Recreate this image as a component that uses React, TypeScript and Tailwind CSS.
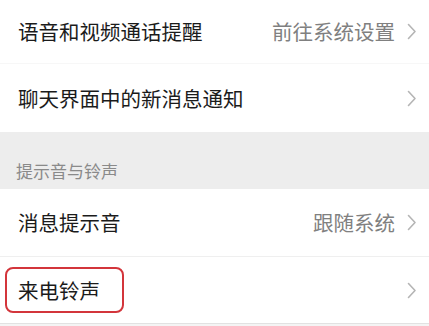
const FONT = "font-['Noto_Sans_CJK_SC','Noto_Sans',sans-serif]";

function Chevron() {
  return (
    <svg width="10" height="17" viewBox="0 0 10 17" fill="none" className="shrink-0">
      <path d="M1.5 1.5L8 8.5L1.5 15.5" stroke="#b5b5b5" strokeWidth="1.6" strokeLinecap="round" strokeLinejoin="round" />
    </svg>
  );
}

function Row({ label, value, height, highlight }: { label: string; value?: string; height: string; highlight?: boolean }) {
  return (
    <div className={`relative flex items-center justify-between bg-white pl-[18px] pr-[12px] ${height}`}>
      <span className="text-[20.5px] leading-none text-[#1b1b1b]">{label}</span>
      <div className="flex items-center gap-[12px]">
        {value && <span className="text-[20.5px] leading-none text-[#808080]">{value}</span>}
        <Chevron />
      </div>
      {highlight && (
        <div className="absolute left-[5px] top-[10px] h-[46px] w-[119px] rounded-[8px] border-2 border-[#d3353b]" />
      )}
    </div>
  );
}

export default function App() {
  return (
    <div className={`w-[429px] h-[326px] overflow-hidden bg-[#ededed] ${FONT}`}>
      <Row label="语音和视频通话提醒" value="前往系统设置" height="h-[63px]" />
      <div className="h-px bg-[#f7f7f7]" />
      <Row label="聊天界面中的新消息通知" height="h-[68px]" />
      <div className="flex h-[57px] items-end pb-[10px] pl-[16px] text-[17px] leading-none text-[#8a8a8a]">
        提示音与铃声
      </div>
      <Row label="消息提示音" value="跟随系统" height="h-[67px]" />
      <div className="h-px bg-[#efefef]" />
      <Row label="来电铃声" height="h-[66px]" highlight />
      <div className="h-px bg-[#e2e2e2]" />
      <div className="h-[10px] bg-[#f4f4f4]" />
    </div>
  );
}
